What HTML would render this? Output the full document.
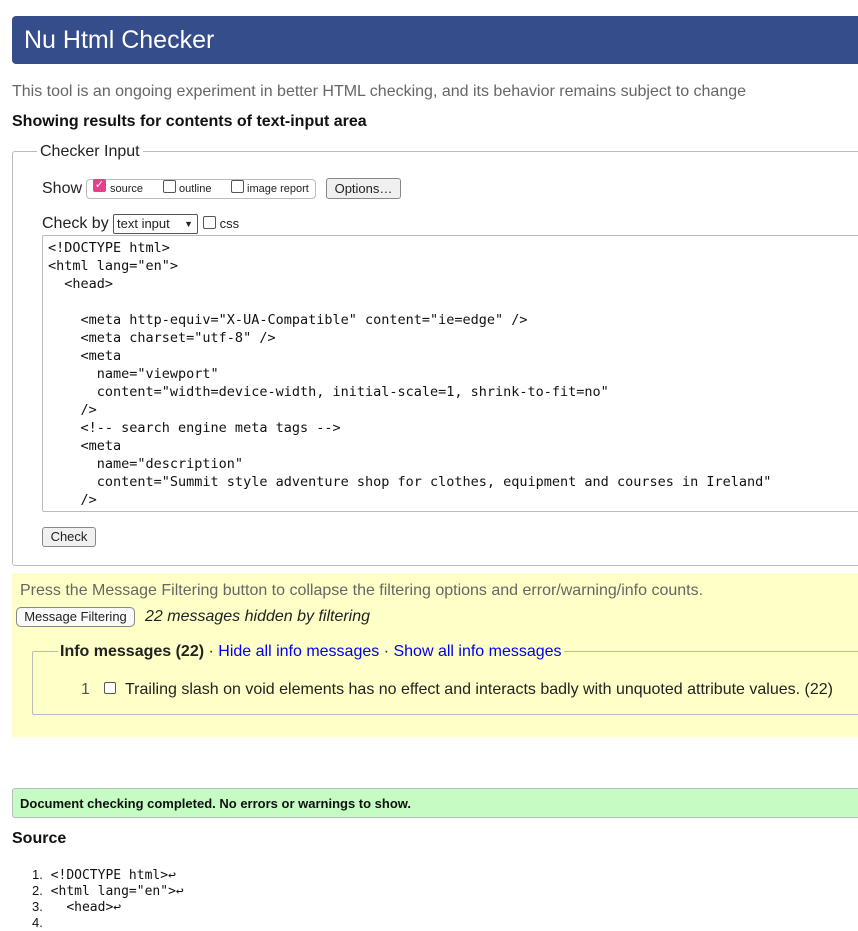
<!DOCTYPE html>
<html><head><style>
body{margin:0;width:858px;height:913px;overflow:hidden;background:#fff;font-family:"Liberation Sans",Arial,sans-serif;color:#222;position:relative}
.a{position:absolute;white-space:nowrap}
.mono{font-family:"DejaVu Sans Mono","Liberation Mono",monospace}
.cb{display:inline-block;width:11px;height:11px;border:1px solid #555;border-radius:2px;background:#fff;vertical-align:-1px}
.btn{position:absolute;border:1px solid #888;border-radius:3px;background:#f0f0f0;font-size:13px;text-align:center;box-sizing:border-box}
</style></head><body>
<div class="a" style="left:12px;top:16px;width:860px;height:48px;background:#354d8a;border-radius:4px"></div>
<div class="a" style="left:24px;top:24px;font-size:25px;color:#fff;line-height:32px">Nu Html Checker</div>
<div class="a" style="left:12px;top:83px;font-size:16px;color:#666">This tool is an ongoing experiment in better HTML checking, and its behavior remains subject to change</div>
<div class="a" style="left:12px;top:113px;font-size:16px;font-weight:bold;color:#111">Showing results for contents of text-input area</div>

<div class="a" style="left:12px;top:151px;width:870px;height:413px;border:1px solid #bbb;border-radius:3px"></div>
<div class="a" style="left:37px;top:143px;font-size:16px;background:#fff;padding:0 3px;color:#222">Checker Input</div>
<div class="a" style="left:42px;top:180px;font-size:16px">Show</div>
<div class="a" style="left:86px;top:179px;width:228px;height:18px;border:1px solid #bbb;border-radius:4px"></div>
<div class="a" style="left:93px;top:179px;width:13px;height:13px;background:#e83e8c;border-radius:2px;color:#fff;font-size:11px;line-height:13px;text-align:center">✓</div>
<div class="a" style="left:110px;top:183px;font-size:11px">source</div>
<div class="a" style="left:163px;top:180px;font-size:11px"><span class="cb"></span> outline</div>
<div class="a" style="left:231px;top:180px;font-size:11px"><span class="cb"></span> image report</div>
<div class="btn" style="left:326px;top:178px;width:75px;height:21px;line-height:19px">Options…</div>
<div class="a" style="left:42px;top:215px;font-size:16px">Check by</div>
<div class="a" style="left:113px;top:214px;width:80px;height:18px;border:1px solid #555;border-radius:2px;font-size:13px;line-height:18px;padding-left:3px">text input <span style="position:absolute;right:4px;font-size:9px">▼</span></div>
<div class="a" style="left:203px;top:216px;font-size:13px"><span class="cb"></span> css</div>
<div class="a" style="left:42px;top:235px;width:830px;height:275px;border:1px solid #bbb;border-radius:2px;overflow:hidden">
<pre class="mono" style="margin:0;padding:3px 5px;font-size:13.5px;line-height:18px;color:#111">&lt;!DOCTYPE html&gt;
&lt;html lang="en"&gt;
  &lt;head&gt;

    &lt;meta http-equiv="X-UA-Compatible" content="ie=edge" /&gt;
    &lt;meta charset="utf-8" /&gt;
    &lt;meta
      name="viewport"
      content="width=device-width, initial-scale=1, shrink-to-fit=no"
    /&gt;
    &lt;!-- search engine meta tags --&gt;
    &lt;meta
      name="description"
      content="Summit style adventure shop for clothes, equipment and courses in Ireland"
    /&gt;</pre></div>
<div class="btn" style="left:42px;top:527px;width:54px;height:20px;line-height:18px">Check</div>

<div class="a" style="left:12px;top:573px;width:860px;height:164px;background:#ffffc8"></div>
<div class="a" style="left:20px;top:582px;font-size:16px;color:#666">Press the Message Filtering button to collapse the filtering options and error/warning/info counts.</div>
<div class="btn" style="left:16px;top:607px;width:119px;height:20px;line-height:18px;background:#fafafa;border-radius:5px">Message Filtering</div>
<div class="a" style="left:145px;top:608px;font-size:16px;font-style:italic">22 messages hidden by filtering</div>
<div class="a" style="left:32px;top:651px;width:840px;height:62px;border:1px solid #bbb;border-radius:2px"></div>
<div class="a" style="left:58px;top:643px;font-size:16px;background:#ffffc8;padding:0 2px"><b>Info messages (22)</b> · <span style="color:#00e">Hide all info messages</span> · <span style="color:#00e">Show all info messages</span></div>
<div class="a" style="left:81px;top:681px;font-size:16px;color:#555">1</div>
<div class="a" style="left:104px;top:680px;"><span class="cb" style="width:10px;height:10px"></span></div>
<div class="a" style="left:125px;top:681px;font-size:16px">Trailing slash on void elements has no effect and interacts badly with unquoted attribute values. (22)</div>

<div class="a" style="left:12px;top:788px;width:860px;height:28px;background:#c4fcc4;border:1px solid #bbb;border-radius:3px"></div>
<div class="a" style="left:20px;top:796px;font-size:13px;font-weight:bold;color:#111">Document checking completed. No errors or warnings to show.</div>
<div class="a" style="left:12px;top:830px;font-size:16px;font-weight:bold;color:#111">Source</div>
<div class="a mono" style="left:32px;top:867px;font-size:13px;line-height:15px;color:#111"><pre style="margin:0;font:inherit"><span style="font-family:'Liberation Sans'">1.</span> &lt;!DOCTYPE html&gt;↩
<span style="font-family:'Liberation Sans'">2.</span> &lt;html lang="en"&gt;↩
<span style="font-family:'Liberation Sans'">3.</span>   &lt;head&gt;↩
<span style="font-family:'Liberation Sans'">4.</span></pre></div>
</body></html>
